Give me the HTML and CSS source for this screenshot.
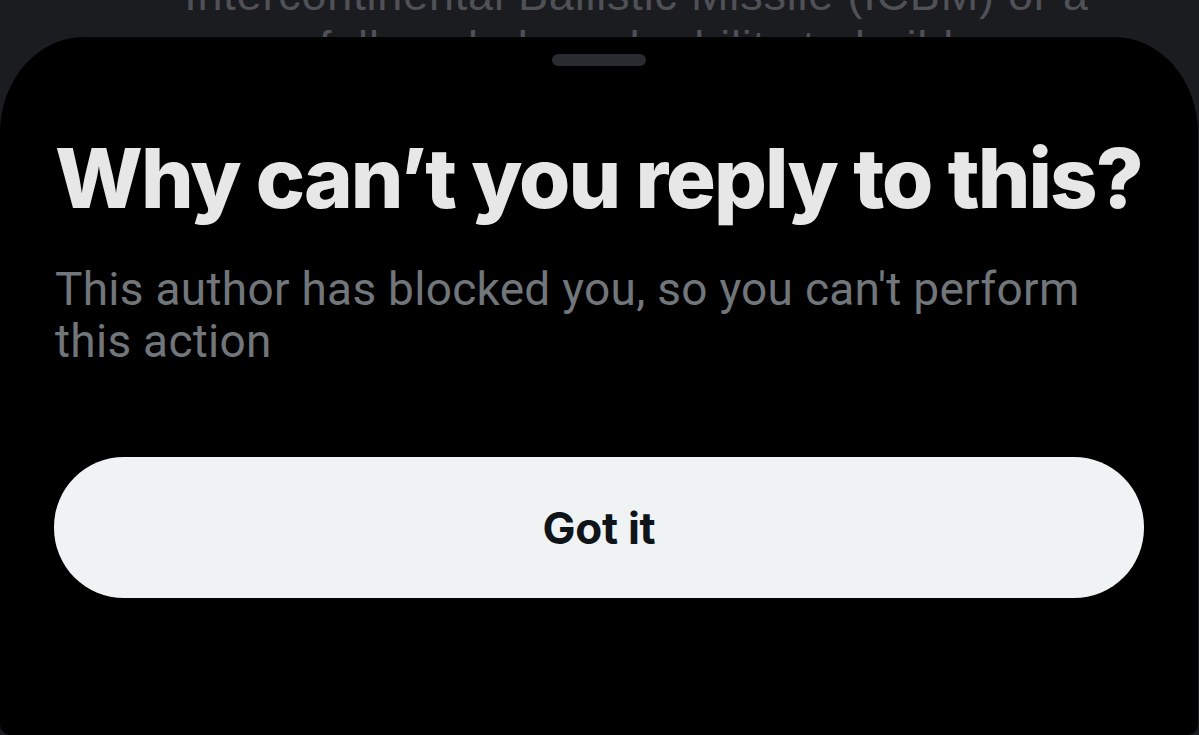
FILE: index.html
```html
<!DOCTYPE html>
<html lang="en">
<head>
<meta charset="utf-8">
<title>Why can’t you reply to this?</title>
<link rel="stylesheet" href="styles.css">
</head>
<body>
  <div class="backdrop">
    <p class="backdrop-text">Intercontinental Ballistic Missile (ICBM) or a<br>full-scale launch ability to build</p>
  </div>
  <section class="sheet" role="dialog" aria-labelledby="sheet-title">
    <div class="handle"></div>
    <h1 class="title" id="sheet-title">Why can’t you reply to this?</h1>
    <p class="message">This author has blocked you, so you can't perform this action</p>
    <button class="got-it" type="button">Got it</button>
  </section>
</body>
</html>
```

FILE: styles.css
```css
html, body {
  margin: 0;
  padding: 0;
  height: 100%;
}

body {
  background: #1b1c20;
  font-family: Inter, "Liberation Sans", sans-serif;
  overflow: hidden;
  position: relative;
}

.backdrop {
  display: flex;
  justify-content: center;
  padding-left: 74px;
}

.backdrop-text {
  margin: -31px 0 0;
  font-family: "Liberation Sans", Arial, sans-serif;
  font-size: 45px;
  line-height: 52px;
  letter-spacing: 0.8px;
  color: #505157;
  text-align: center;
}

.sheet {
  position: absolute;
  top: 37px;
  left: 0;
  right: 1px;
  bottom: 0;
  background: #000;
  border-radius: 84px 84px 10px 10px / 96px 96px 10px 10px;
  display: flex;
  flex-direction: column;
  padding: 17px 55px 0;
  box-sizing: border-box;
}

.handle {
  align-self: center;
  width: 94px;
  height: 12px;
  border-radius: 6px;
  background: #2a2b30;
}

.title {
  margin: 70px 0 0;
  font-size: 83px;
  line-height: 84px;
  font-weight: 800;
  letter-spacing: -1.95px;
  color: #e7e7e7;
  white-space: nowrap;
}

.message {
  margin: 43px 0 0;
  font-family: Roboto, "Liberation Sans", sans-serif;
  font-size: 46px;
  line-height: 52px;
  font-weight: 400;
  letter-spacing: 0.28px;
  color: #71767b;
  max-width: 1060px;
}

.got-it {
  margin: 90px 0 0 -1px;
  width: 1090px;
  height: 141px;
  border: none;
  border-radius: 70px;
  background: #eff3f4;
  color: #0f1419;
  font-family: Inter, "Liberation Sans", sans-serif;
  font-size: 44px;
  font-weight: 700;
  letter-spacing: -0.3px;
  padding: 0;
}
```
